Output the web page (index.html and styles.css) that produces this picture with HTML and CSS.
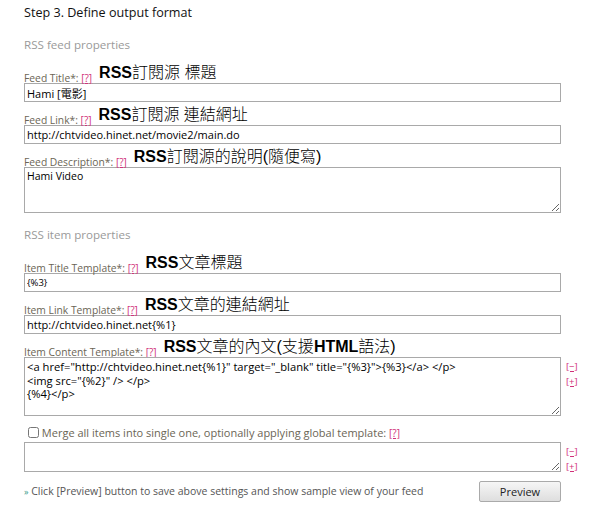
FILE: index.html
```html
<!DOCTYPE html>
<html lang="zh-Hant">
<head>
  <meta charset="UTF-8" />
  <title>Define output format</title>
  <link rel="stylesheet" href="styles.css">
</head>
<body>
  <div class="container">
    <h2 class="step">Step 3. Define output format</h2>

    <h3 class="section">RSS feed properties</h3>

    <div class="field">
      <div class="label">Feed Title*: <a href="#" class="help">[?]</a><span class="note"><b>RSS</b>訂閱源 標題</span></div>
      <input type="text" class="input" value="Hami [電影]">
    </div>
    <div class="field">
      <div class="label">Feed Link*: <a href="#" class="help">[?]</a><span class="note"><b>RSS</b>訂閱源 連結網址</span></div>
      <input type="text" class="input" value="http://chtvideo.hinet.net/movie2/main.do">
    </div>
    <div class="field">
      <div class="label">Feed Description*: <a href="#" class="help">[?]</a><span class="note"><b>RSS</b>訂閱源的說明(隨便寫)</span></div>
      <textarea class="input area">Hami Video</textarea>
    </div>

    <h3 class="section">RSS item properties</h3>

    <div class="field">
      <div class="label">Item Title Template*: <a href="#" class="help">[?]</a><span class="note"><b>RSS</b>文章標題</span></div>
      <input type="text" class="input small" value="{%3}">
    </div>
    <div class="field">
      <div class="label">Item Link Template*: <a href="#" class="help">[?]</a><span class="note"><b>RSS</b>文章的連結網址</span></div>
      <input type="text" class="input" value="http://chtvideo.hinet.net{%1}">
    </div>
    <div class="field">
      <div class="label">Item Content Template*: <a href="#" class="help">[?]</a><span class="note"><b>RSS</b>文章的內文(支援<b>HTML</b>語法)</span></div>
      <div class="row">
        <textarea class="input area tall">&lt;a href="http://chtvideo.hinet.net{%1}" target="_blank" title="{%3}"&gt;{%3}&lt;/a&gt; &lt;/p&gt;
&lt;img src="{%2}" /&gt; &lt;/p&gt;
{%4}&lt;/p&gt;</textarea>
        <div class="sizer"><a href="#">[−]</a><a href="#">[+]</a></div>
      </div>
    </div>

    <div class="merge">
      <label class="check"><input type="checkbox"> Merge all items into single one, optionally applying global template: <a href="#" class="help">[?]</a></label>
      <div class="row">
        <textarea class="input area short"></textarea>
        <div class="sizer"><a href="#">[−]</a><a href="#">[+]</a></div>
      </div>
    </div>

    <div class="footer">
      <span class="hint"><span class="arrow">»</span> Click [Preview] button to save above settings and show sample view of your feed</span>
      <button class="btn">Preview</button>
    </div>
  </div>
</body>
</html>
```

FILE: styles.css
```css
body {
  font-family: 'Open Sans', 'Noto Sans CJK TC', sans-serif;
  background-color: #fff;
  margin: 0;
  padding: 0;
  color: #222;
}
.container {
  width: 560px;
  padding: 3px 0 0 24px;
}
.step {
  font-size: 12.6px;
  font-weight: normal;
  line-height: 20px;
  margin: 0;
  color: #111;
}
.section {
  font-size: 11.6px;
  font-weight: normal;
  line-height: 20px;
  margin: 12px 0 9px;
  color: #9a9a9a;
}
.field {
  margin-bottom: 4px;
}
.label {
  height: 19px;
  font-size: 10.3px;
  line-height: 26px;
  color: #6b6555;
  white-space: nowrap;
}
.help {
  color: #d0307a;
  font-size: 10px;
}
.note {
  font-family: 'Liberation Sans', 'Noto Sans CJK TC', sans-serif;
  font-size: 16px;
  font-weight: 300;
  color: #000;
  margin-left: 7px;
  position: relative;
  top: -4px;
}
.note b {
  font-weight: bold;
}
.input {
  display: block;
  box-sizing: border-box;
  width: 537px;
  height: 19px;
  margin: 0;
  padding: 0 2px;
  border: 1px solid #a9a9a9;
  font-family: 'Open Sans', 'Noto Sans CJK TC', sans-serif;
  font-size: 11px;
  color: #000;
}
.small {
  font-size: 9.5px;
}
.area {
  height: 46px;
  padding: 2px 2px;
  font-size: 10.5px;
  line-height: 13px;
}
.tall {
  height: 59px;
  font-size: 11.2px;
  line-height: 13.5px;
}
.short {
  height: 30px;
}
.row {
  display: flex;
  align-items: flex-start;
}
.sizer {
  display: flex;
  flex-direction: column;
  margin: 2px 0 0 5px;
  font-size: 9.5px;
  line-height: 15px;
}
.sizer a {
  color: #d0307a;
}
.check {
  display: block;
  height: 22px;
  font-size: 11px;
  line-height: 26px;
  color: #6b6555;
}
.check input {
  margin: 0 0 0 4px;
  width: 11px;
  height: 11px;
  vertical-align: -1px;
}
.footer {
  display: flex;
  justify-content: space-between;
  align-items: center;
  width: 537px;
  margin-top: 7px;
}
.hint {
  font-size: 10.5px;
  line-height: 16px;
  color: #555;
}
.arrow {
  color: #3a9a8a;
  font-size: 9px;
}
.btn {
  width: 82px;
  height: 21px;
  padding: 0;
  font-family: 'Open Sans', sans-serif;
  font-size: 11px;
  color: #222;
  border: 1px solid #aaa;
  border-radius: 2px;
  background: linear-gradient(#f6f6f6, #dedede);
}
```
